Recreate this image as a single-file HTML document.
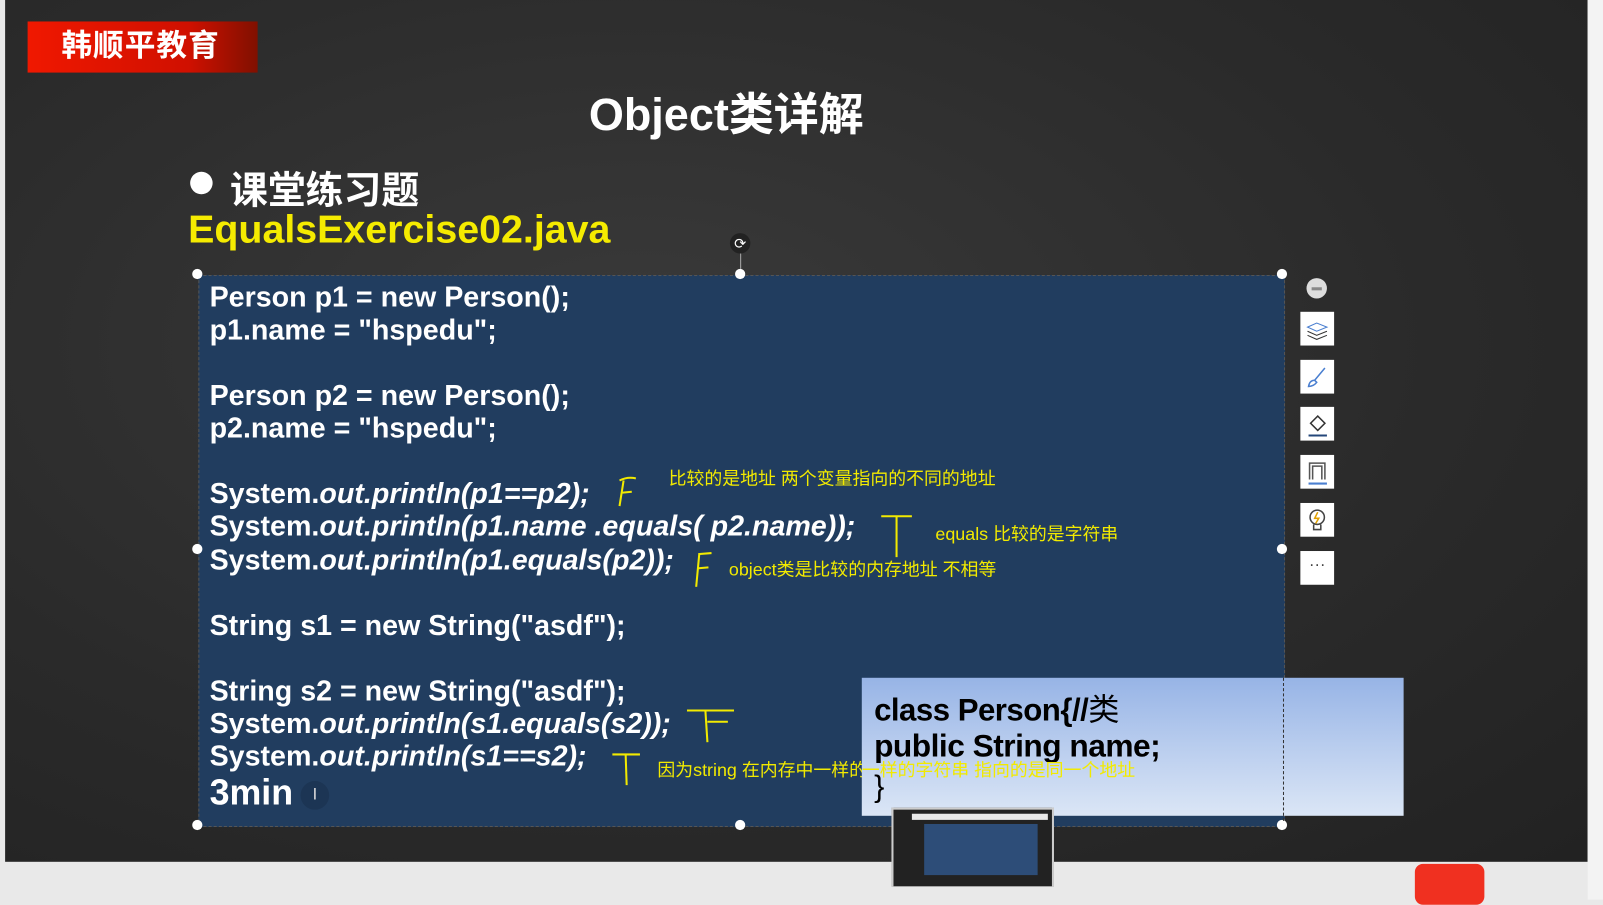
<!DOCTYPE html>
<html><head><meta charset="utf-8"><style>
body{margin:0;width:1603px;height:880px;background:#e9e9e9;position:relative;overflow:hidden;font-family:"Liberation Sans","Noto Sans CJK SC",sans-serif}
#w{position:absolute;left:0;top:0;width:1568px;height:861px;transform:scale(1.0223);transform-origin:0 0}
.slide{position:absolute;left:5px;top:0;width:1548px;height:843px;background:radial-gradient(ellipse at 40% 40%,#3a3a3a,#2a2a2a 60%,#222 100%)}
.abs{position:absolute}
.logo{left:27px;top:21px;width:225px;height:50px;background:linear-gradient(90deg,#f01800,#d01000 70%,#801000);color:#fff;font-weight:bold;font-size:30px;line-height:50px;text-indent:33px;letter-spacing:1px}
.code{left:194px;top:269px;width:1061px;height:538px;background:#213d5f;border:1px dashed #555}
.cl{position:absolute;left:205px;color:#fff;font-weight:bold;font-size:28px;letter-spacing:0;white-space:nowrap;transform:scaleX(1.0);transform-origin:0 0}
.cl i{font-style:italic}
.h{position:absolute;width:10px;height:10px;border-radius:50%;background:#fff}
.ann{position:absolute;color:#f2ea00;font-size:17.5px;white-space:nowrap}
.tb{position:absolute;left:1272px;width:33px;height:33px;background:#fff}
</style></head><body><div id="w">
<div class="slide"></div>
<div class="abs logo">韩顺平教育</div>
<div class="abs" style="left:576px;top:76px;color:#fff;font-weight:bold;font-size:44px">Object类详解</div>
<div class="abs" style="left:186px;top:168px;width:22px;height:22px;border-radius:50%;background:#fff"></div>
<div class="abs" style="left:225px;top:156px;color:#fff;font-weight:bold;font-size:37px">课堂练习题</div>
<div class="abs" style="left:184px;top:203px;color:#f5eb00;font-weight:bold;font-size:38.5px;letter-spacing:0">EqualsExercise02.java</div>
<div class="abs code"></div>
<div class="cl" style="top:275px">Person p1 = new Person();</div>
<div class="cl" style="top:307px">p1.name = "hspedu";</div>
<div class="cl" style="top:371px">Person p2 = new Person();</div>
<div class="cl" style="top:403px">p2.name = "hspedu";</div>
<div class="cl" style="top:467px">System.<i>out.println(p1==p2);</i></div>
<div class="cl" style="top:499px">System.<i>out.println(p1.name .equals( p2.name));</i></div>
<div class="cl" style="top:532px">System.<i>out.println(p1.equals(p2));</i></div>
<div class="cl" style="top:596px">String s1 = new String("asdf");</div>
<div class="cl" style="top:660px">String s2 = new String("asdf");</div>
<div class="cl" style="top:692px">System.<i>out.println(s1.equals(s2));</i></div>
<div class="cl" style="top:724px">System.<i>out.println(s1==s2);</i></div>
<div class="cl" style="top:756px;font-size:35px">3min</div>
<div class="abs" style="left:294px;top:764px;width:28px;height:28px;border-radius:50%;background:#1c3554;color:#ddd;text-align:center;line-height:28px;font-size:16px">I</div>
<div class="h" style="left:188px;top:263px"></div><div class="h" style="left:719px;top:263px"></div><div class="h" style="left:1249px;top:263px"></div>
<div class="h" style="left:188px;top:532px"></div><div class="h" style="left:1249px;top:532px"></div>
<div class="h" style="left:188px;top:802px"></div><div class="h" style="left:719px;top:802px"></div><div class="h" style="left:1249px;top:802px"></div>
<div class="abs" style="left:714px;top:228px;width:20px;height:20px;border-radius:50%;background:#222;color:#fff;font-size:14px;text-align:center;line-height:20px">⟳</div>
<div class="abs" style="left:724px;top:248px;width:1px;height:15px;background:#aaa"></div>
<div class="ann" style="left:654px;top:455px">比较的是地址 两个变量指向的不同的地址</div>
<div class="ann" style="left:915px;top:509px">equals 比较的是字符串</div>
<div class="ann" style="left:713px;top:544px">object类是比较的内存地址 不相等</div>
<div class="ann" style="left:643px;top:740px">因为string 在内存中一样的字符串 指向的是同一个地址</div>
<svg class="abs" style="left:0;top:0" width="1568" height="861" fill="none" stroke="#f2ea00" stroke-width="2">
<path d="M610 470 L606 495 M606 470 Q614 466 622 468 M608 482 L618 481"/>
<path d="M862 505 L892 505 M877 505 L877 545"/>
<path d="M684 542 L681 574 M683 542 L696 541 M682 556 L693 555"/>
<path d="M672 695 L718 695 M690 695 L692 726 M692 706 L712 706"/>
<path d="M599 738 L626 738 M612 738 L613 768"/>
</svg>
<div class="abs" style="left:1278px;top:272px;width:20px;height:20px;border-radius:50%;background:#ddd"><div style="margin:9px 5px;height:3px;background:#888"></div></div>
<div class="tb" style="top:305px"><svg width="33" height="33" fill="none" stroke="#333"><path d="M7 15 L16 11 L26 15 L16 19 Z" stroke="#4a7fd0"/><path d="M7 19 L16 23 L26 19 M7 23 L16 27 L26 23"/></svg></div>
<div class="tb" style="top:352px"><svg width="33" height="33" fill="none" stroke="#4a7fd0" stroke-width="1.5"><path d="M24 8 L14 20 M8 26 Q9 20 14 20 L16 22 Q13 26 8 26Z"/></svg></div>
<div class="tb" style="top:398px"><svg width="33" height="33" fill="none" stroke="#333" stroke-width="1.5"><path d="M10 16 L17 9 L24 16 L17 23 Z"/><path d="M8 28 L26 28" stroke="#24477a" stroke-width="2"/></svg></div>
<div class="tb" style="top:445px"><svg width="33" height="33" fill="none" stroke="#555" stroke-width="1.5"><path d="M9 24 V8 H24 V24 M12 24 V11 H21 V24"/><path d="M8 28 L26 28" stroke="#4a7fd0" stroke-width="2"/></svg></div>
<div class="tb" style="top:492px"><svg width="33" height="33" fill="none" stroke="#444" stroke-width="1.5"><circle cx="16.5" cy="14" r="7"/><path d="M13 21 V26 H20 V21"/><path d="M17 9 L14 15 H18 L15 20" stroke="#e0a000"/></svg></div>
<div class="tb" style="top:539px;text-align:center;line-height:28px;color:#444">···</div>
<div class="abs" style="left:843px;top:663px;width:530px;height:135px;background:linear-gradient(180deg,#97b4e6,#dbe6f6)"></div>
<div class="abs" style="left:855px;top:670px;font-size:30.5px;font-weight:bold;color:#000;letter-spacing:-0.5px">class Person{//<span style="font-weight:normal">类</span></div>
<div class="abs" style="left:855px;top:712px;font-size:31px;font-weight:bold;color:#000;letter-spacing:-0.5px">public String name;</div>
<div class="abs" style="left:855px;top:753px;font-size:30px;color:#000">}</div>
<div class="ann" style="left:843px;top:740px">一样的字符串 指向的是同一个地址</div>
<div class="abs" style="left:1255px;top:663px;width:0;height:140px;border-left:1px dashed #333"></div>
<div class="abs" style="left:872px;top:790px;width:155px;height:75px;background:#222;border:2px solid #ccc;border-bottom:0"><div style="margin:4px 4px 0 18px;height:6px;background:#e8e8e8"></div><div style="margin:4px 14px 0 30px;height:50px;background:#2d4d78"></div></div>
<div class="abs" style="left:1384px;top:845px;width:68px;height:40px;border-radius:8px;background:#f03020"></div>
<div class="abs" style="left:1553px;top:0;width:50px;height:880px;background:#f3f3f3"></div>
</div></body></html>
